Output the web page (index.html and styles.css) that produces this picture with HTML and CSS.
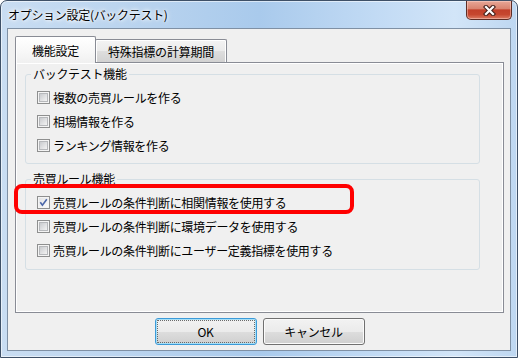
FILE: index.html
```html
<!DOCTYPE html>
<html lang="ja">
<head>
<meta charset="utf-8">
<title>オプション設定(バックテスト)</title>
<link rel="stylesheet" href="styles.css">
</head>
<body>
<div class="window">
  <div class="titlebar">
    <div class="title">オプション設定(バックテスト)</div>
    <div class="close">
      <svg width="13" height="11" viewBox="0 0 13 11">
        <path d="M3 2 L10 9 M10 2 L3 9" stroke="#47221c" stroke-width="4.4" stroke-linecap="square" fill="none"/>
        <path d="M3 2 L10 9 M10 2 L3 9" stroke="#ffffff" stroke-width="2.2" stroke-linecap="square" fill="none"/>
      </svg>
    </div>
  </div>
  <div class="client">
    <div class="tabs">
      <div class="tab active">機能設定</div>
      <div class="tab inactive">特殊指標の計算期間</div>
    </div>
    <div class="panel">
      <fieldset class="group">
        <legend>バックテスト機能</legend>
        <div class="row"><span class="cb"><i></i></span>複数の売買ルールを作る</div>
        <div class="row"><span class="cb"><i></i></span>相場情報を作る</div>
        <div class="row"><span class="cb"><i></i></span>ランキング情報を作る</div>
      </fieldset>
      <fieldset class="group second">
        <legend>売買ルール機能</legend>
        <div class="row highlight"><span class="cb checked"><i><svg width="9" height="9" viewBox="0 0 9 9"><path d="M1.3 4.3 L3.4 7.2 L7.8 1.2" stroke="#4a66a8" stroke-width="1.6" fill="none"/></svg></i></span>売買ルールの条件判断に相関情報を使用する</div>
        <div class="row"><span class="cb"><i></i></span>売買ルールの条件判断に環境データを使用する</div>
        <div class="row"><span class="cb"><i></i></span>売買ルールの条件判断にユーザー定義指標を使用する</div>
      </fieldset>
    </div>
    <div class="buttons">
      <button class="btn default">OK</button>
      <button class="btn">キャンセル</button>
    </div>
  </div>
</div>
</body>
</html>
```

FILE: styles.css
```css
*, *::before, *::after { box-sizing: border-box; }
html, body { margin: 0; padding: 0; }
body {
  width: 518px;
  height: 358px;
  overflow: hidden;
  background: #ffffff;
  font-family: "Noto Sans CJK JP", "Noto Sans", sans-serif;
  font-size: 12px;
  color: #000;
}
.window {
  width: 518px;
  height: 358px;
  border: 1px solid #3e5067;
  border-radius: 7px 7px 0 0;
  background: linear-gradient(to right, #c9ddf2 0%, #b7d2ee 30%, #a9caec 50%, #c4dcf5 75%, #d2e5f8 88%, #bed7f1 100%);
  box-shadow: inset 0 0 0 1px rgba(255,255,255,0.55);
  display: flex;
  flex-direction: column;
}
.titlebar {
  height: 27px;
  display: flex;
  justify-content: space-between;
  align-items: flex-start;
}
.title {
  padding-left: 7px;
  line-height: 27px;
  font-size: 12px;
  letter-spacing: -0.3px;
  color: #000;
  text-shadow: 0 0 6px #fff, 0 0 4px #fff, 0 0 2px #fff;
}
.close {
  width: 46px;
  height: 19px;
  margin-right: 5px;
  border: 1px solid #5e2d25;
  border-top: none;
  border-radius: 0 0 5px 5px;
  background: linear-gradient(#e7a797 0%, #d98470 42%, #c2402a 50%, #c6472f 75%, #dc7b63 100%);
  box-shadow: inset 0 0 0 1px rgba(255,220,210,0.45);
  display: flex;
  align-items: center;
  justify-content: center;
}
.close svg { display: block; }
.client {
  flex: 1;
  margin: 0 6px 6px;
  border: 1px solid #7f90a4;
  background: #f0f0f0;
  padding: 7px 6px 0 7px;
  display: flex;
  flex-direction: column;
}
.tabs {
  display: flex;
  align-items: flex-end;
  height: 26px;
  position: relative;
  z-index: 1;
}
.tab {
  border: 1px solid #898c95;
  border-bottom: none;
  border-radius: 2px 2px 0 0;
  display: flex;
  align-items: center;
  justify-content: center;
  letter-spacing: -0.2px;
}
.tab.active {
  width: 81px;
  height: 27px;
  margin-bottom: -1px;
  position: relative;
  z-index: 2;
  background: linear-gradient(#ffffff, #f7f7f7 60%, #f0f0f0);
  box-shadow: inset 1px 1px #fff;
}
.tab.inactive {
  width: 132px;
  height: 23px;
  margin-left: -1px;
  background: linear-gradient(#f3f3f3, #ebebeb 50%, #dedede 51%, #d2d2d2);
  box-shadow: inset 1px 1px #fff, inset -1px 0 #fff;
}
.panel {
  height: 251px;
  border: 1px solid #898c95;
  box-shadow: inset 0 0 0 1px #fff;
  padding: 0 23px 0 9px;
}
.group {
  margin: 4px 0 0 0;
  min-inline-size: 0;
  border: 1px solid #d5dfe5;
  border-radius: 3px;
  padding: 4px 0 6px 0;
}
.group.second { margin-top: 8px; padding-bottom: 7px; }
.group legend {
  margin-left: 5px;
  padding: 0 2px;
  height: 14px;
  line-height: 14px;
  font-size: 12px;
  letter-spacing: -0.3px;
}
.row {
  height: 24px;
  display: flex;
  align-items: center;
  padding-left: 11px;
  letter-spacing: -0.33px;
  position: relative;
  white-space: nowrap;
}
.cb {
  width: 13px;
  height: 13px;
  flex: none;
  border: 1px solid #8e8f8f;
  background: #f4f4f4;
  padding: 1px;
  margin-right: 3px;
}
.cb i {
  display: block;
  width: 9px;
  height: 9px;
  border: 1px solid #b6b8bb;
  background: linear-gradient(135deg, #c9cbce 0%, #dcdddf 45%, #f3f3f3 100%);
}
.cb.checked i {
  border: none;
  background: linear-gradient(135deg, #e1e3e6 0%, #f2f2f2 60%, #fafafa 100%);
}
.cb.checked svg { display: block; }
.highlight::before {
  content: "";
  position: absolute;
  left: -12px;
  top: -6px;
  width: 340px;
  height: 30px;
  border: 4px solid #ff0000;
  border-radius: 8px;
  pointer-events: none;
}
.buttons {
  display: flex;
  justify-content: center;
  gap: 6px;
  margin-top: 5px;
}
.btn {
  width: 102px;
  height: 27px;
  border: 1px solid #707070;
  border-radius: 3px;
  background: linear-gradient(#f2f2f2, #ebebeb 50%, #dddddd 51%, #cfcfcf);
  box-shadow: inset 0 0 0 1px #fbfbfb;
  font-family: inherit;
  font-size: 12px;
  color: #000;
  padding: 0;
  display: flex;
  align-items: center;
  justify-content: center;
  letter-spacing: -0.3px;
}
.btn.default {
  border-color: #3c9ad8;
  box-shadow: inset 0 0 0 1px #a6e0f8;
  outline: 1px dotted #6a6a6a;
  outline-offset: -3px;
}
```
